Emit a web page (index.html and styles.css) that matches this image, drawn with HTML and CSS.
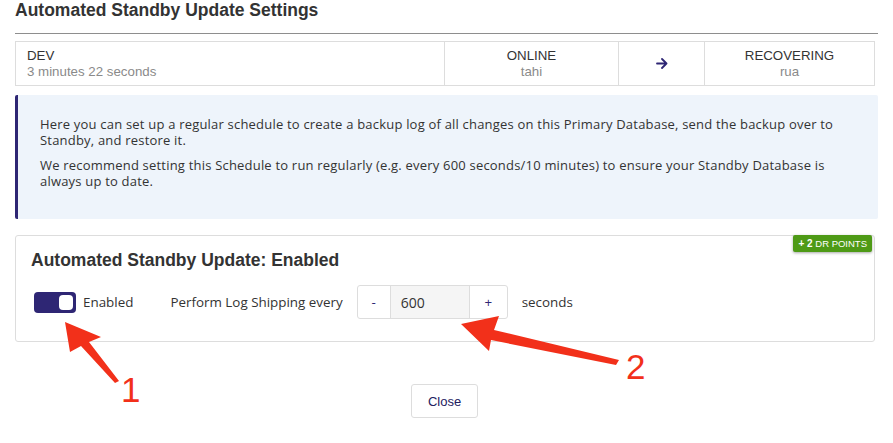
FILE: index.html
```html
<!DOCTYPE html>
<html>
<head>
<meta charset="utf-8">
<link rel="stylesheet" href="styles.css">
</head>
<body>
<div class="page">
  <div class="header"><h1 class="title">Automated Standby Update Settings</h1></div>
  <div class="status">
    <div class="cell cell-main">
      <div class="label">DEV</div>
      <div class="sub">3 minutes 22 seconds</div>
    </div>
    <div class="cell cell-mid">
      <div class="label">ONLINE</div>
      <div class="sub">tahi</div>
    </div>
    <div class="cell cell-arrow">
      <svg width="12" height="11" viewBox="0 0 12 11"><path d="M1 5.5H10.5M6 1L10.5 5.5L6 10" fill="none" stroke="#2e2674" stroke-width="1.8" stroke-linecap="round" stroke-linejoin="round"/></svg>
    </div>
    <div class="cell cell-mid cell-last">
      <div class="label">RECOVERING</div>
      <div class="sub">rua</div>
    </div>
  </div>
  <div class="info">
    <p>Here you can set up a regular schedule to create a backup log of all changes on this Primary Database, send the backup over to Standby, and restore it.</p>
    <p>We recommend setting this Schedule to run regularly (e.g. every 600 seconds/10 minutes) to ensure your Standby Database is always up to date.</p>
  </div>
  <div class="card">
    <span class="badge"><b>+ 2</b> DR POINTS</span>
    <h2 class="card-title">Automated Standby Update: Enabled</h2>
    <div class="row">
      <span class="toggle"><span class="knob"></span></span>
      <span class="toggle-label">Enabled</span>
      <span class="field-label">Perform Log Shipping every</span>
      <div class="stepper">
        <span class="step">-</span>
        <span class="value">600</span>
        <span class="step step-plus">+</span>
      </div>
      <span class="unit">seconds</span>
    </div>
  </div>
  <div class="footer"><button class="close">Close</button></div>
</div>
<svg class="annot" width="893" height="443" viewBox="0 0 893 443">
  <polygon points="65,322 101,337 89,342 119,381 115,383 81,346 70,352" fill="#f2301a"/>
  <polygon points="461,324 499,316 494,330 619,360 616,365 491,340 489,351" fill="#f2301a"/>
  <text x="121" y="402" class="num">1</text>
  <text x="626" y="379" class="num">2</text>
</svg>
</body>
</html>
```
FILE: styles.css
```css
html, body {
  margin: 0;
  padding: 0;
  background: #fff;
}
body {
  font-family: "Open Sans", "Liberation Sans", Arial, sans-serif;
  color: #333;
  position: relative;
  width: 893px;
  height: 443px;
  overflow: hidden;
}
.page {
  padding: 0 15px;
}
.header {
  height: 33px;
  border-bottom: 1px solid #8e8e8e;
}
.title {
  margin: 0;
  font-family: "Liberation Sans", Arial, sans-serif;
  font-size: 17.5px;
  line-height: 20px;
  font-weight: bold;
  color: #333;
}
.status {
  margin-top: 7px;
  margin-right: 3px;
  height: 45px;
  border: 1px solid #ddd;
  display: flex;
  box-sizing: border-box;
}
.cell {
  display: flex;
  flex-direction: column;
  justify-content: center;
  font-family: "Liberation Sans", Arial, sans-serif;
  font-size: 13.3px;
  line-height: 15.5px;
}
.cell-main {
  width: 429px;
  padding-left: 11px;
  box-sizing: border-box;
  border-right: 1px solid #ddd;
}
.cell-mid {
  width: 173px;
  text-align: center;
  border-right: 1px solid #ddd;
}
.cell-last {
  border-right: none;
  flex: 1;
}
.cell-arrow {
  width: 85px;
  align-items: center;
  border-right: 1px solid #ddd;
}
.label { color: #333; }
.sub { color: #8a8a8a; }
.info {
  margin-top: 9px;
  height: 124px;
  box-sizing: border-box;
  background: #eef4fb;
  border-left: 3px solid #2e2674;
  border-radius: 2px;
  padding: 21px 20px 0 22px;
  font-size: 13px;
  line-height: 16px;
  letter-spacing: 0.2px;
  color: #333;
}
.info p {
  margin: 0 0 9px;
}
.card {
  position: relative;
  margin-top: 16px;
  margin-right: 3px;
  border: 1px solid #ddd;
  border-radius: 3px;
  height: 107px;
  box-sizing: border-box;
  padding: 14px 15px 0 15px;
}
.badge {
  position: absolute;
  top: -1px;
  right: 2px;
  background: #4e9a16;
  color: #fff;
  font-family: "Liberation Sans", Arial, sans-serif;
  font-size: 9.5px;
  line-height: 17px;
  padding: 0 5px;
  border-radius: 2px;
  box-shadow: 0 1px 3px rgba(0,0,0,0.35);
}
.badge b { font-size: 10px; }
.card-title {
  margin: 0;
  font-family: "Liberation Sans", Arial, sans-serif;
  font-size: 17.5px;
  line-height: 20px;
  font-weight: bold;
  color: #333;
}
.row {
  display: flex;
  align-items: center;
  margin-top: 15px;
  font-size: 13.4px;
}
.toggle {
  width: 42px;
  height: 21px;
  margin-left: 3px;
  background: #2e2674;
  border-radius: 4px;
  display: flex;
  justify-content: flex-end;
  align-items: center;
  padding-right: 3px;
  box-sizing: border-box;
}
.knob {
  width: 14px;
  height: 15px;
  background: #fff;
  border-radius: 4px;
}
.toggle-label {
  margin-left: 7px;
}
.field-label {
  margin-left: 37px;
}
.stepper {
  margin-left: 14px;
  display: flex;
  height: 34px;
  border: 1px solid #ddd;
  border-radius: 3px;
  box-sizing: border-box;
}
.step {
  width: 32px;
  display: flex;
  align-items: center;
  justify-content: center;
  color: #2e2674;
}
.step-plus {
  width: 37px;
  border-left: 1px solid #ddd;
}
.value {
  width: 79px;
  background: #f5f5f5;
  border-left: 1px solid #ddd;
  display: flex;
  align-items: center;
  padding-left: 10px;
  box-sizing: border-box;
  font-size: 14px;
}
.unit {
  margin-left: 14px;
}
.footer {
  display: flex;
  justify-content: center;
  margin-top: 42px;
  padding-right: 4px;
}
.close {
  width: 67px;
  height: 34px;
  background: #fff;
  border: 1px solid #ddd;
  border-radius: 3px;
  font-family: "Liberation Sans", Arial, sans-serif;
  font-size: 13px;
  color: #232060;
}
.annot {
  position: absolute;
  left: 0;
  top: 0;
  pointer-events: none;
}
.num {
  font-family: "Liberation Sans", Arial, sans-serif;
  font-size: 35px;
  fill: #f2301a;
}
```
